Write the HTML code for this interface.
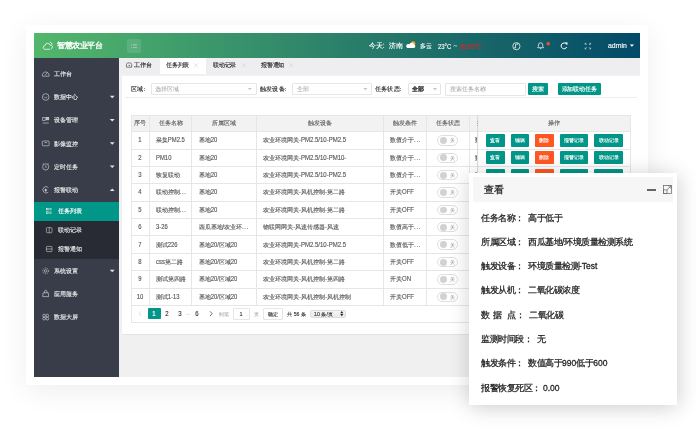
<!DOCTYPE html><html><head><meta charset="utf-8"><style>
*{margin:0;padding:0;box-sizing:border-box}
html,body{width:697px;height:429px;overflow:hidden;background:#fff;font-family:"Liberation Sans", sans-serif}
.a{position:absolute}
.t{position:absolute;white-space:nowrap}
svg{position:absolute;overflow:visible}
</style></head><body><div style="position:absolute;left:0;top:0;width:697px;height:429px;will-change:transform"><div class="a" style="left:26.00px;top:25.00px;width:622.00px;height:360.00px;background:#fff;border-radius:3px;box-shadow:0 6px 28px rgba(0,0,0,0.07)"></div>
<div class="a" style="left:34.00px;top:33.00px;width:606.00px;height:25.00px;background:linear-gradient(90deg,#53b76c,#034a68)"></div>
<div class="a" style="left:119.00px;top:58.00px;width:521.00px;height:319.00px;background:#f0f0f0"></div>
<div class="a" style="left:119.00px;top:58.00px;width:521.00px;height:15.50px;background:#eeeef0"></div>
<div class="a" style="left:159.70px;top:58.00px;width:46.00px;height:15.50px;background:#fff"></div>
<div class="a" style="left:121.50px;top:76.30px;width:518.50px;height:257.70px;background:#fff;box-shadow:0 0.5px 1px rgba(0,0,0,0.05)"></div>
<div class="a" style="left:34.00px;top:58.00px;width:85.00px;height:319.00px;background:#393d49"></div>
<div class="a" style="left:34.00px;top:201.80px;width:85.00px;height:57.20px;background:#282b33"></div>
<div class="a" style="left:34.00px;top:201.80px;width:85.00px;height:19.20px;background:#009688"></div>
<svg style="left:0;top:0" width="697" height="429" viewBox="0 0 697 429"><g fill="none" stroke="#fff" stroke-width="0.75" stroke-linecap="round"><path d="M49.8 49.3 H44.6 A1.9 1.9 0 0 1 44.9 45.6 A2.75 2.75 0 0 1 50.3 45.5 A1.6 1.6 0 0 1 51.3 48.6"/><path d="M50.3 42.2 A2.4 2.4 0 0 1 52.1 44.5"/></g></svg>
<div class="t" style="left:57.00px;top:0;font-size:40px;line-height:40px;transform:translate(0,41.18px) scale(0.19000);transform-origin:0 0;color:#fff;font-weight:400;-webkit-text-stroke:1.68px #fff;">智慧农业平台</div>
<div class="a" style="left:127.10px;top:38.90px;width:13.90px;height:13.70px;background:rgba(255,255,255,0.12);border-radius:2px"></div>
<svg style="left:0;top:0" width="697" height="429" viewBox="0 0 697 429"><g fill="rgba(255,255,255,0.4)"><rect x="131.2" y="44.4" width="0.9" height="1.1"/><rect x="132.8" y="44.4" width="4.2" height="1.1"/><rect x="131.2" y="47.0" width="0.9" height="0.8"/><rect x="132.8" y="47.0" width="4.2" height="0.8"/></g></svg>
<div class="t" style="left:368.90px;top:0;font-size:40px;line-height:40px;transform:translate(0,42.07px) scale(0.16500);transform-origin:0 0;color:#fff;font-weight:400;-webkit-text-stroke:0.73px #fff;">今天</div>
<svg style="left:0;top:0" width="697" height="429" viewBox="0 0 697 429"><g fill="rgba(255,255,255,0.85)"><rect x="383.1" y="43.6" width="1" height="1"/><rect x="383.1" y="46.9" width="1" height="1"/></g></svg>
<div class="t" style="left:388.60px;top:0;font-size:40px;line-height:40px;transform:translate(0,42.07px) scale(0.16500);transform-origin:0 0;color:#fff;font-weight:400;-webkit-text-stroke:0.73px #fff;">济南</div>
<svg style="left:0;top:0" width="697" height="429" viewBox="0 0 697 429"><circle cx="413.1" cy="43.6" r="2.3" fill="#f5a623"/><path d="M407.2 47.9 H414.1 A1.7 1.7 0 0 0 414.0 44.6 A2.5 2.5 0 0 0 409.3 44.3 A1.8 1.8 0 0 0 407.2 47.9Z" fill="#fff"/></svg>
<div class="t" style="left:420.00px;top:0;font-size:40px;line-height:40px;transform:translate(0,42.21px) scale(0.15750);transform-origin:0 0;color:#fff;font-weight:400;-webkit-text-stroke:0.76px #fff;">多云</div>
<div class="t" style="left:438.30px;top:0;font-size:40px;line-height:40px;transform:translate(0,43.81px) scale(0.14750);transform-origin:0 0;color:#fff;font-weight:400;-webkit-text-stroke:0.81px #fff;"><span style="display:inline-block;transform:scaleY(1.08);transform-origin:0 85%">23°C</span></div>
<svg style="left:0;top:0" width="697" height="429" viewBox="0 0 697 429"><path d="M453.5 46.2 Q454.4 44.9 455.3 45.8 Q456.2 46.7 457.1 45.4" fill="none" stroke="rgba(255,255,255,0.9)" stroke-width="0.75"/></svg>
<div class="t" style="left:459.80px;top:0;font-size:40px;line-height:40px;transform:translate(0,43.81px) scale(0.14750);transform-origin:0 0;color:#ee1c24;font-weight:400;-webkit-text-stroke:1.08px #ee1c24;"><span style="display:inline-block;transform:scaleY(1.08);transform-origin:0 85%">30.67°C</span></div>
<svg style="left:0;top:0" width="697" height="429" viewBox="0 0 697 429"><g fill="none" stroke="#fff" stroke-width="0.75"><circle cx="516.4" cy="46.2" r="3.6"/><path d="M515.6 47.6 V44.3 L517.6 43.8 V44.8"/><circle cx="515.0" cy="47.7" r="0.7" fill="#fff" stroke="none"/></g></svg>
<svg style="left:0;top:0" width="697" height="429" viewBox="0 0 697 429"><g fill="none" stroke="#fff" stroke-width="0.7"><path d="M537.6 47.7 H543.6 L542.8 46.6 V45.0 A2.2 2.2 0 0 0 538.4 45.0 V46.6 Z"/><path d="M539.9 48.6 H541.3"/></g></svg>
<svg style="left:0;top:0" width="697" height="429" viewBox="0 0 697 429"><circle cx="548.2" cy="43.8" r="1.8" fill="#f5502a"/></svg>
<svg style="left:0;top:0" width="697" height="429" viewBox="0 0 697 429"><g fill="none" stroke="#fff" stroke-width="1.0"><path d="M566.4 44.2 A2.9 2.9 0 1 0 566.7 47.0"/></g><path d="M564.9 42.2 L567.6 42.5 L567.2 45.2 Z" fill="#fff"/></svg>
<svg style="left:0;top:0" width="697" height="429" viewBox="0 0 697 429"><g fill="none" stroke="rgba(255,255,255,0.75)" stroke-width="0.7"><path d="M585.3 43.7 L586.6 45.0 M590.4 43.7 L589.1 45.0 M585.3 48.6 L586.6 47.3 M590.4 48.6 L589.1 47.3"/><path d="M585.1 44.6 V43.3 H586.4 M589.3 43.3 H590.6 V44.6 M590.6 47.7 V49.0 H589.3 M586.4 49.0 H585.1 V47.7"/></g></svg>
<div class="t" style="left:608.00px;top:0;font-size:40px;line-height:40px;transform:translate(0,42.12px) scale(0.17250);transform-origin:0 0;color:#fff;font-weight:400;-webkit-text-stroke:0.70px #fff;"><span style="display:inline-block;transform:scaleY(1.08);transform-origin:0 85%">admin</span></div>
<svg style="left:0;top:0" width="697" height="429" viewBox="0 0 697 429"><path d="M629.8 44.4 H634.0 L631.9 46.8Z" fill="#fff"/></svg>
<div class="t" style="left:53.60px;top:0;font-size:40px;line-height:40px;transform:translate(0,71.03px) scale(0.14625);transform-origin:0 0;color:rgba(255,255,255,0.8);font-weight:400;-webkit-text-stroke:1.16px rgba(255,255,255,0.8);">工作台</div>
<svg style="left:0;top:0" width="697" height="429" viewBox="0 0 697 429"><g fill="none" stroke="rgba(255,255,255,0.62)" stroke-width="0.8" transform="translate(45.70,73.90)"><path d="M-3.3 2.3 A3.4 3.4 0 1 1 3.3 2.3 Z"/><path d="M-0.6 1.3 L1.8 -1.4"/></g></svg>
<div class="t" style="left:53.60px;top:0;font-size:40px;line-height:40px;transform:translate(0,94.13px) scale(0.14625);transform-origin:0 0;color:rgba(255,255,255,0.8);font-weight:400;-webkit-text-stroke:1.16px rgba(255,255,255,0.8);">数据中心</div>
<svg style="left:0;top:0" width="697" height="429" viewBox="0 0 697 429"><g fill="none" stroke="rgba(255,255,255,0.62)" stroke-width="0.8" transform="translate(45.70,97.00)"><circle r="3.3"/><path d="M-1.5 -0.3 L0 1.2 L1.5 -0.3"/></g></svg>
<svg style="left:0;top:0" width="697" height="429" viewBox="0 0 697 429"><path d="M109.8 95.80 H114.7 L112.25 98.30Z" fill="rgba(255,255,255,0.85)"/></svg>
<div class="t" style="left:53.60px;top:0;font-size:40px;line-height:40px;transform:translate(0,117.33px) scale(0.14625);transform-origin:0 0;color:rgba(255,255,255,0.8);font-weight:400;-webkit-text-stroke:1.16px rgba(255,255,255,0.8);">设备管理</div>
<svg style="left:0;top:0" width="697" height="429" viewBox="0 0 697 429"><g fill="none" stroke="rgba(255,255,255,0.62)" stroke-width="0.8" transform="translate(45.70,120.20)"><rect x="-3" y="-2.8" width="2.5" height="3" /><rect x="0.6" y="-2.8" width="2.4" height="2.4" fill="rgba(255,255,255,0.62)"/><path d="M-3 2.8 H3"/></g></svg>
<svg style="left:0;top:0" width="697" height="429" viewBox="0 0 697 429"><path d="M109.8 119.00 H114.7 L112.25 121.50Z" fill="rgba(255,255,255,0.85)"/></svg>
<div class="t" style="left:53.60px;top:0;font-size:40px;line-height:40px;transform:translate(0,140.53px) scale(0.14625);transform-origin:0 0;color:rgba(255,255,255,0.8);font-weight:400;-webkit-text-stroke:1.16px rgba(255,255,255,0.8);">影像监控</div>
<svg style="left:0;top:0" width="697" height="429" viewBox="0 0 697 429"><g fill="none" stroke="rgba(255,255,255,0.62)" stroke-width="0.8" transform="translate(45.70,143.40)"><rect x="-3.4" y="-2.4" width="6.8" height="4.8" rx="0.9"/><path d="M-1.2 -0.5 L0.3 -1.2 L1.5 -0.3"/></g></svg>
<svg style="left:0;top:0" width="697" height="429" viewBox="0 0 697 429"><path d="M109.8 142.20 H114.7 L112.25 144.70Z" fill="rgba(255,255,255,0.85)"/></svg>
<div class="t" style="left:53.60px;top:0;font-size:40px;line-height:40px;transform:translate(0,163.73px) scale(0.14625);transform-origin:0 0;color:rgba(255,255,255,0.8);font-weight:400;-webkit-text-stroke:1.16px rgba(255,255,255,0.8);">定时任务</div>
<svg style="left:0;top:0" width="697" height="429" viewBox="0 0 697 429"><g fill="none" stroke="rgba(255,255,255,0.62)" stroke-width="0.8" transform="translate(45.70,166.60)"><circle cy="0.3" r="3.1"/><path d="M0 -1.2 V0.6 H1.2 M-3 -2.6 L-2 -3.4 M3 -2.6 L2 -3.4"/></g></svg>
<svg style="left:0;top:0" width="697" height="429" viewBox="0 0 697 429"><path d="M109.8 165.40 H114.7 L112.25 167.90Z" fill="rgba(255,255,255,0.85)"/></svg>
<div class="t" style="left:53.60px;top:0;font-size:40px;line-height:40px;transform:translate(0,186.93px) scale(0.14625);transform-origin:0 0;color:rgba(255,255,255,0.8);font-weight:400;-webkit-text-stroke:1.16px rgba(255,255,255,0.8);">报警联动</div>
<svg style="left:0;top:0" width="697" height="429" viewBox="0 0 697 429"><g fill="none" stroke="rgba(255,255,255,0.62)" stroke-width="0.8" transform="translate(45.70,189.80)"><path d="M2.6 -2.3 A3.2 3.2 0 1 0 2.6 2.3"/><path d="M-0.6 1.3 V-0.2 A0.6 0.6 0 0 1 0.6 -0.2 V1.3 Z" fill="rgba(255,255,255,0.62)"/></g></svg>
<svg style="left:0;top:0" width="697" height="429" viewBox="0 0 697 429"><path d="M109.8 191.00 H114.7 L112.25 188.50Z" fill="rgba(255,255,255,0.85)"/></svg>
<div class="t" style="left:53.60px;top:0;font-size:40px;line-height:40px;transform:translate(0,268.03px) scale(0.14625);transform-origin:0 0;color:rgba(255,255,255,0.8);font-weight:400;-webkit-text-stroke:1.16px rgba(255,255,255,0.8);">系统设置</div>
<svg style="left:0;top:0" width="697" height="429" viewBox="0 0 697 429"><g fill="none" stroke="rgba(255,255,255,0.62)" stroke-width="0.8" transform="translate(45.70,270.90)"><circle r="1.3"/><circle r="2.9" stroke-dasharray="1.2 0.9"/></g></svg>
<svg style="left:0;top:0" width="697" height="429" viewBox="0 0 697 429"><path d="M109.8 269.70 H114.7 L112.25 272.20Z" fill="rgba(255,255,255,0.85)"/></svg>
<div class="t" style="left:53.60px;top:0;font-size:40px;line-height:40px;transform:translate(0,290.93px) scale(0.14625);transform-origin:0 0;color:rgba(255,255,255,0.8);font-weight:400;-webkit-text-stroke:1.16px rgba(255,255,255,0.8);">应用服务</div>
<svg style="left:0;top:0" width="697" height="429" viewBox="0 0 697 429"><g fill="none" stroke="rgba(255,255,255,0.62)" stroke-width="0.8" transform="translate(45.70,293.80)"><path d="M-3 2.8 H3 L2.6 -1 H-2.6 Z"/><path d="M-1.2 -1 V-2.2 A1.2 1.2 0 0 1 1.2 -2.2 V-1"/></g></svg>
<div class="t" style="left:53.60px;top:0;font-size:40px;line-height:40px;transform:translate(0,314.23px) scale(0.14625);transform-origin:0 0;color:rgba(255,255,255,0.8);font-weight:400;-webkit-text-stroke:1.16px rgba(255,255,255,0.8);">数据大屏</div>
<svg style="left:0;top:0" width="697" height="429" viewBox="0 0 697 429"><g fill="none" stroke="rgba(255,255,255,0.62)" stroke-width="0.8" transform="translate(45.70,317.10)"><circle cx="-1.6" cy="-1.5" r="1.4"/><circle cx="1.6" cy="-1.5" r="1.4"/><circle cx="-1.6" cy="1.5" r="1.4"/><circle cx="1.6" cy="1.5" r="1.4"/></g></svg>
<div class="t" style="left:57.60px;top:0;font-size:40px;line-height:40px;transform:translate(0,208.43px) scale(0.14625);transform-origin:0 0;color:#fff;font-weight:400;-webkit-text-stroke:1.16px #fff;">任务列表</div>
<div class="t" style="left:57.60px;top:0;font-size:40px;line-height:40px;transform:translate(0,227.33px) scale(0.14625);transform-origin:0 0;color:rgba(255,255,255,0.8);font-weight:400;-webkit-text-stroke:1.16px rgba(255,255,255,0.8);">联动记录</div>
<div class="t" style="left:57.60px;top:0;font-size:40px;line-height:40px;transform:translate(0,246.23px) scale(0.14625);transform-origin:0 0;color:rgba(255,255,255,0.8);font-weight:400;-webkit-text-stroke:1.16px rgba(255,255,255,0.8);">报警通知</div>
<svg style="left:0;top:0" width="697" height="429" viewBox="0 0 697 429"><g fill="none" stroke="rgba(255,255,255,0.85)" stroke-width="0.7"><rect x="46.6" y="208.3" width="1.6" height="1.6"/><rect x="46.6" y="211.8" width="1.6" height="1.6"/><path d="M49.3 208.6 H51.6 M49.3 209.8 H51.6 M49.3 212.1 H51.6 M49.3 213.3 H51.6"/></g></svg>
<svg style="left:0;top:0" width="697" height="429" viewBox="0 0 697 429"><g fill="none" stroke="rgba(255,255,255,0.62)" stroke-width="0.75"><rect x="46.4" y="227.6" width="5.6" height="5.2" rx="1"/><path d="M49.2 227.6 V232.8"/></g></svg>
<svg style="left:0;top:0" width="697" height="429" viewBox="0 0 697 429"><g fill="none" stroke="rgba(255,255,255,0.62)" stroke-width="0.75"><rect x="46.4" y="246.4" width="5.6" height="5.2" rx="0.8"/><path d="M46.4 249 H52"/></g></svg>
<svg style="left:0;top:0" width="697" height="429" viewBox="0 0 697 429"><g fill="none" stroke="#555" stroke-width="0.75"><path d="M126.5 67.2 V64.4 Q126.5 63.5 127.4 63.2 L129.1 62.8 L130.8 63.2 Q131.7 63.5 131.7 64.4 V67.2 Z"/></g><circle cx="129.3" cy="65.4" r="0.65" fill="#555"/></svg>
<div class="t" style="left:134.20px;top:0;font-size:40px;line-height:40px;transform:translate(0,62.38px) scale(0.14375);transform-origin:0 0;color:#333;font-weight:400;-webkit-text-stroke:1.11px #333;">工作台</div>
<div class="t" style="left:165.70px;top:0;font-size:40px;line-height:40px;transform:translate(0,62.38px) scale(0.14375);transform-origin:0 0;color:#333;font-weight:400;-webkit-text-stroke:1.11px #333;">任务列表</div>
<div class="t" style="left:213.00px;top:0;font-size:40px;line-height:40px;transform:translate(0,62.38px) scale(0.14375);transform-origin:0 0;color:#333;font-weight:400;-webkit-text-stroke:1.11px #333;">联动记录</div>
<div class="t" style="left:260.70px;top:0;font-size:40px;line-height:40px;transform:translate(0,62.38px) scale(0.14375);transform-origin:0 0;color:#333;font-weight:400;-webkit-text-stroke:1.11px #333;">报警通知</div>
<svg style="left:0;top:0" width="697" height="429" viewBox="0 0 697 429"><path d="M194.20 63.2 L198.20 67.4 M198.20 63.2 L194.20 67.4" stroke="#c8c8c8" stroke-width="0.45" fill="none"/></svg>
<svg style="left:0;top:0" width="697" height="429" viewBox="0 0 697 429"><path d="M241.80 63.2 L245.80 67.4 M245.80 63.2 L241.80 67.4" stroke="#c8c8c8" stroke-width="0.45" fill="none"/></svg>
<svg style="left:0;top:0" width="697" height="429" viewBox="0 0 697 429"><path d="M289.10 63.2 L293.10 67.4 M293.10 63.2 L289.10 67.4" stroke="#c8c8c8" stroke-width="0.45" fill="none"/></svg>
<div class="t" style="left:130.70px;top:0;font-size:40px;line-height:40px;transform:translate(0,85.76px) scale(0.15500);transform-origin:0 0;color:#333;font-weight:400;-webkit-text-stroke:0.97px #333;">区域:</div>
<div class="a" style="left:151.00px;top:82.80px;width:105.70px;height:12.60px;border:0.6px solid #e6e6e6;border-radius:1px"></div>
<div class="t" style="left:155.10px;top:0;font-size:40px;line-height:40px;transform:translate(0,86.16px) scale(0.15000);transform-origin:0 0;color:#aaa;font-weight:400;-webkit-text-stroke:0.33px #aaa;">选择区域</div>
<svg style="left:0;top:0" width="697" height="429" viewBox="0 0 697 429"><path d="M247.90 87.90 H251.90 L249.90 90.10Z" fill="#c2c2c2"/></svg>
<div class="t" style="left:259.80px;top:0;font-size:40px;line-height:40px;transform:translate(0,85.76px) scale(0.15500);transform-origin:0 0;color:#333;font-weight:400;-webkit-text-stroke:0.97px #333;">触发设备:</div>
<div class="a" style="left:291.50px;top:82.80px;width:80.50px;height:12.60px;border:0.6px solid #e6e6e6;border-radius:1px"></div>
<div class="t" style="left:296.50px;top:0;font-size:40px;line-height:40px;transform:translate(0,86.16px) scale(0.15000);transform-origin:0 0;color:#aaa;font-weight:400;-webkit-text-stroke:0.33px #aaa;">全部</div>
<svg style="left:0;top:0" width="697" height="429" viewBox="0 0 697 429"><path d="M363.30 88.00 H367.30 L365.30 90.20Z" fill="#c2c2c2"/></svg>
<div class="t" style="left:375.30px;top:0;font-size:40px;line-height:40px;transform:translate(0,85.76px) scale(0.15500);transform-origin:0 0;color:#333;font-weight:400;-webkit-text-stroke:0.97px #333;">任务状态:</div>
<div class="a" style="left:407.50px;top:82.80px;width:33.50px;height:12.60px;border:0.6px solid #e6e6e6;border-radius:1px"></div>
<div class="t" style="left:411.80px;top:0;font-size:40px;line-height:40px;transform:translate(0,86.16px) scale(0.15000);transform-origin:0 0;color:#333;font-weight:400;-webkit-text-stroke:2.33px #333;">全部</div>
<svg style="left:0;top:0" width="697" height="429" viewBox="0 0 697 429"><path d="M433.00 88.00 H437.00 L435.00 90.20Z" fill="#c2c2c2"/></svg>
<div class="a" style="left:445.20px;top:82.70px;width:80.50px;height:13.00px;border:0.6px solid #e6e6e6;border-radius:1px"></div>
<div class="t" style="left:449.50px;top:0;font-size:40px;line-height:40px;transform:translate(0,86.16px) scale(0.15000);transform-origin:0 0;color:#aaa;font-weight:400;-webkit-text-stroke:0.33px #aaa;">搜索任务名称</div>
<div class="a" style="left:528.30px;top:82.70px;width:20.20px;height:12.40px;background:#009688;border-radius:1px"></div>
<div class="t" style="left:338.40px;width:2758.62px;text-align:center;top:0;font-size:40px;line-height:40px;transform:translate(0,86.16px) scale(0.14500);transform-origin:0 0;color:#fff;font-weight:400;-webkit-text-stroke:1.03px #fff;">搜索</div>
<div class="a" style="left:557.50px;top:82.70px;width:43.90px;height:12.40px;background:#009688;border-radius:1px"></div>
<div class="t" style="left:379.45px;width:2758.62px;text-align:center;top:0;font-size:40px;line-height:40px;transform:translate(0,86.16px) scale(0.14500);transform-origin:0 0;color:#fff;font-weight:400;-webkit-text-stroke:1.03px #fff;">添加联动任务</div>
<div class="a" style="left:124.80px;top:97.10px;width:512.70px;height:0.60px;background:#eee"></div>
<div class="a" style="left:131.30px;top:115.00px;width:499.50px;height:16.50px;background:#f2f2f2"></div>
<div class="a" style="left:131.30px;top:115.00px;width:499.50px;height:207.60px;border:0.6px solid #e6e6e6"></div>
<div class="a" style="left:149.20px;top:115.00px;width:0.60px;height:190.20px;background:#e6e6e6"></div>
<div class="a" style="left:191.20px;top:115.00px;width:0.60px;height:190.20px;background:#e6e6e6"></div>
<div class="a" style="left:255.50px;top:115.00px;width:0.60px;height:190.20px;background:#e6e6e6"></div>
<div class="a" style="left:383.30px;top:115.00px;width:0.60px;height:190.20px;background:#e6e6e6"></div>
<div class="a" style="left:426.00px;top:115.00px;width:0.60px;height:190.20px;background:#e6e6e6"></div>
<div class="a" style="left:468.60px;top:115.00px;width:0.60px;height:190.20px;background:#e6e6e6"></div>
<div class="a" style="left:131.30px;top:131.20px;width:499.50px;height:0.60px;background:#e6e6e6"></div>
<div class="a" style="left:131.30px;top:148.57px;width:499.50px;height:0.60px;background:#e6e6e6"></div>
<div class="a" style="left:131.30px;top:165.94px;width:499.50px;height:0.60px;background:#e6e6e6"></div>
<div class="a" style="left:131.30px;top:183.31px;width:499.50px;height:0.60px;background:#e6e6e6"></div>
<div class="a" style="left:131.30px;top:200.68px;width:499.50px;height:0.60px;background:#e6e6e6"></div>
<div class="a" style="left:131.30px;top:218.05px;width:499.50px;height:0.60px;background:#e6e6e6"></div>
<div class="a" style="left:131.30px;top:235.42px;width:499.50px;height:0.60px;background:#e6e6e6"></div>
<div class="a" style="left:131.30px;top:252.79px;width:499.50px;height:0.60px;background:#e6e6e6"></div>
<div class="a" style="left:131.30px;top:270.16px;width:499.50px;height:0.60px;background:#e6e6e6"></div>
<div class="a" style="left:131.30px;top:287.53px;width:499.50px;height:0.60px;background:#e6e6e6"></div>
<div class="a" style="left:131.30px;top:304.90px;width:499.50px;height:0.60px;background:#e6e6e6"></div>
<div class="t" style="left:-59.60px;width:2711.86px;text-align:center;top:0;font-size:40px;line-height:40px;transform:translate(0,120.01px) scale(0.14750);transform-origin:0 0;color:#666;font-weight:400;-webkit-text-stroke:1.02px #666;">序号</div>
<div class="t" style="left:-29.50px;width:2711.86px;text-align:center;top:0;font-size:40px;line-height:40px;transform:translate(0,120.01px) scale(0.14750);transform-origin:0 0;color:#666;font-weight:400;-webkit-text-stroke:1.02px #666;">任务名称</div>
<div class="t" style="left:23.65px;width:2711.86px;text-align:center;top:0;font-size:40px;line-height:40px;transform:translate(0,120.01px) scale(0.14750);transform-origin:0 0;color:#666;font-weight:400;-webkit-text-stroke:1.02px #666;">所属区域</div>
<div class="t" style="left:119.70px;width:2711.86px;text-align:center;top:0;font-size:40px;line-height:40px;transform:translate(0,120.01px) scale(0.14750);transform-origin:0 0;color:#666;font-weight:400;-webkit-text-stroke:1.02px #666;">触发设备</div>
<div class="t" style="left:204.95px;width:2711.86px;text-align:center;top:0;font-size:40px;line-height:40px;transform:translate(0,120.01px) scale(0.14750);transform-origin:0 0;color:#666;font-weight:400;-webkit-text-stroke:1.02px #666;">触发条件</div>
<div class="t" style="left:247.60px;width:2711.86px;text-align:center;top:0;font-size:40px;line-height:40px;transform:translate(0,120.01px) scale(0.14750);transform-origin:0 0;color:#666;font-weight:400;-webkit-text-stroke:1.02px #666;">任务状态</div>
<div class="t" style="left:-59.60px;width:2711.86px;text-align:center;top:0;font-size:40px;line-height:40px;transform:translate(0,137.29px) scale(0.14750);transform-origin:0 0;color:#555;font-weight:400;-webkit-text-stroke:0.81px #555;"><span style="display:inline-block;transform:scaleY(1.08);transform-origin:0 85%">1</span></div>
<div class="t" style="left:155.50px;top:0;font-size:40px;line-height:40px;transform:translate(0,137.29px) scale(0.14750);transform-origin:0 0;color:#555;font-weight:400;-webkit-text-stroke:0.81px #555;">采集<span style="display:inline-block;transform:scaleY(1.08);transform-origin:0 85%">PM2.5</span></div>
<div class="t" style="left:199.00px;top:0;font-size:40px;line-height:40px;transform:translate(0,137.29px) scale(0.14750);transform-origin:0 0;color:#555;font-weight:400;-webkit-text-stroke:0.81px #555;">基地<span style="display:inline-block;transform:scaleY(1.08);transform-origin:0 85%">20</span></div>
<div class="t" style="left:262.60px;top:0;font-size:40px;line-height:40px;transform:translate(0,137.25px) scale(0.15000);transform-origin:0 0;color:#555;font-weight:400;-webkit-text-stroke:0.80px #555;">农业环境网关<span style="display:inline-block;transform:scaleY(1.08);transform-origin:0 85%">-PM2.5/10-PM2.5</span></div>
<div class="t" style="left:390.00px;top:0;font-size:40px;line-height:40px;transform:translate(0,137.25px) scale(0.15000);transform-origin:0 0;color:#555;font-weight:400;-webkit-text-stroke:0.80px #555;">数值介于<span style="display:inline-block;letter-spacing:5px;transform:scaleY(1.08);transform-origin:0 85%">...</span></div>
<div class="a" style="left:437.20px;top:135.19px;width:20.70px;height:10.40px;border:0.6px solid #dedede;border-radius:5.2px;background:#fff"></div>
<div class="a" style="left:440.00px;top:137.09px;width:6.90px;height:6.90px;background:#d2d2d2;border-radius:50%"></div>
<div class="t" style="left:251.90px;width:3333.33px;text-align:center;top:0;font-size:40px;line-height:40px;transform:translate(0,138.23px) scale(0.12000);transform-origin:0 0;color:#999;font-weight:400;-webkit-text-stroke:0.67px #999;">关</div>
<div class="t" style="left:474.60px;top:0;font-size:40px;line-height:40px;transform:translate(0,137.25px) scale(0.15000);transform-origin:0 0;color:#555;font-weight:400;-webkit-text-stroke:0.80px #555;">数</div>
<div class="t" style="left:-59.60px;width:2711.86px;text-align:center;top:0;font-size:40px;line-height:40px;transform:translate(0,154.66px) scale(0.14750);transform-origin:0 0;color:#555;font-weight:400;-webkit-text-stroke:0.81px #555;"><span style="display:inline-block;transform:scaleY(1.08);transform-origin:0 85%">2</span></div>
<div class="t" style="left:155.50px;top:0;font-size:40px;line-height:40px;transform:translate(0,154.66px) scale(0.14750);transform-origin:0 0;color:#555;font-weight:400;-webkit-text-stroke:0.81px #555;"><span style="display:inline-block;transform:scaleY(1.08);transform-origin:0 85%">PM10</span></div>
<div class="t" style="left:199.00px;top:0;font-size:40px;line-height:40px;transform:translate(0,154.66px) scale(0.14750);transform-origin:0 0;color:#555;font-weight:400;-webkit-text-stroke:0.81px #555;">基地<span style="display:inline-block;transform:scaleY(1.08);transform-origin:0 85%">20</span></div>
<div class="t" style="left:262.60px;top:0;font-size:40px;line-height:40px;transform:translate(0,154.62px) scale(0.15000);transform-origin:0 0;color:#555;font-weight:400;-webkit-text-stroke:0.80px #555;">农业环境网关<span style="display:inline-block;transform:scaleY(1.08);transform-origin:0 85%">-PM2.5/10-PM10-</span></div>
<div class="t" style="left:390.00px;top:0;font-size:40px;line-height:40px;transform:translate(0,154.62px) scale(0.15000);transform-origin:0 0;color:#555;font-weight:400;-webkit-text-stroke:0.80px #555;">数值介于<span style="display:inline-block;letter-spacing:5px;transform:scaleY(1.08);transform-origin:0 85%">...</span></div>
<div class="a" style="left:437.20px;top:152.56px;width:20.70px;height:10.40px;border:0.6px solid #dedede;border-radius:5.2px;background:#fff"></div>
<div class="a" style="left:440.00px;top:154.46px;width:6.90px;height:6.90px;background:#d2d2d2;border-radius:50%"></div>
<div class="t" style="left:251.90px;width:3333.33px;text-align:center;top:0;font-size:40px;line-height:40px;transform:translate(0,155.60px) scale(0.12000);transform-origin:0 0;color:#999;font-weight:400;-webkit-text-stroke:0.67px #999;">关</div>
<div class="t" style="left:474.60px;top:0;font-size:40px;line-height:40px;transform:translate(0,154.62px) scale(0.15000);transform-origin:0 0;color:#555;font-weight:400;-webkit-text-stroke:0.80px #555;">数</div>
<div class="t" style="left:-59.60px;width:2711.86px;text-align:center;top:0;font-size:40px;line-height:40px;transform:translate(0,172.03px) scale(0.14750);transform-origin:0 0;color:#555;font-weight:400;-webkit-text-stroke:0.81px #555;"><span style="display:inline-block;transform:scaleY(1.08);transform-origin:0 85%">3</span></div>
<div class="t" style="left:155.50px;top:0;font-size:40px;line-height:40px;transform:translate(0,172.03px) scale(0.14750);transform-origin:0 0;color:#555;font-weight:400;-webkit-text-stroke:0.81px #555;">恢复联动</div>
<div class="t" style="left:199.00px;top:0;font-size:40px;line-height:40px;transform:translate(0,172.03px) scale(0.14750);transform-origin:0 0;color:#555;font-weight:400;-webkit-text-stroke:0.81px #555;">基地<span style="display:inline-block;transform:scaleY(1.08);transform-origin:0 85%">20</span></div>
<div class="t" style="left:262.60px;top:0;font-size:40px;line-height:40px;transform:translate(0,171.99px) scale(0.15000);transform-origin:0 0;color:#555;font-weight:400;-webkit-text-stroke:0.80px #555;">农业环境网关<span style="display:inline-block;transform:scaleY(1.08);transform-origin:0 85%">-PM2.5/10-PM2.5</span></div>
<div class="t" style="left:390.00px;top:0;font-size:40px;line-height:40px;transform:translate(0,171.99px) scale(0.15000);transform-origin:0 0;color:#555;font-weight:400;-webkit-text-stroke:0.80px #555;">数值介于<span style="display:inline-block;letter-spacing:5px;transform:scaleY(1.08);transform-origin:0 85%">...</span></div>
<div class="a" style="left:437.20px;top:169.93px;width:20.70px;height:10.40px;border:0.6px solid #dedede;border-radius:5.2px;background:#fff"></div>
<div class="a" style="left:440.00px;top:171.83px;width:6.90px;height:6.90px;background:#d2d2d2;border-radius:50%"></div>
<div class="t" style="left:251.90px;width:3333.33px;text-align:center;top:0;font-size:40px;line-height:40px;transform:translate(0,172.97px) scale(0.12000);transform-origin:0 0;color:#999;font-weight:400;-webkit-text-stroke:0.67px #999;">关</div>
<div class="t" style="left:474.60px;top:0;font-size:40px;line-height:40px;transform:translate(0,171.99px) scale(0.15000);transform-origin:0 0;color:#555;font-weight:400;-webkit-text-stroke:0.80px #555;">数</div>
<div class="t" style="left:-59.60px;width:2711.86px;text-align:center;top:0;font-size:40px;line-height:40px;transform:translate(0,189.40px) scale(0.14750);transform-origin:0 0;color:#555;font-weight:400;-webkit-text-stroke:0.81px #555;"><span style="display:inline-block;transform:scaleY(1.08);transform-origin:0 85%">4</span></div>
<div class="t" style="left:155.50px;top:0;font-size:40px;line-height:40px;transform:translate(0,189.40px) scale(0.14750);transform-origin:0 0;color:#555;font-weight:400;-webkit-text-stroke:0.81px #555;">联动控制<span style="display:inline-block;letter-spacing:5px;transform:scaleY(1.08);transform-origin:0 85%">...</span></div>
<div class="t" style="left:199.00px;top:0;font-size:40px;line-height:40px;transform:translate(0,189.40px) scale(0.14750);transform-origin:0 0;color:#555;font-weight:400;-webkit-text-stroke:0.81px #555;">基地<span style="display:inline-block;transform:scaleY(1.08);transform-origin:0 85%">20</span></div>
<div class="t" style="left:262.60px;top:0;font-size:40px;line-height:40px;transform:translate(0,189.36px) scale(0.15000);transform-origin:0 0;color:#555;font-weight:400;-webkit-text-stroke:0.80px #555;">农业环境网关<span style="display:inline-block;transform:scaleY(1.08);transform-origin:0 85%">-</span>风机控制<span style="display:inline-block;transform:scaleY(1.08);transform-origin:0 85%">-</span>第二路</div>
<div class="t" style="left:390.00px;top:0;font-size:40px;line-height:40px;transform:translate(0,189.36px) scale(0.15000);transform-origin:0 0;color:#555;font-weight:400;-webkit-text-stroke:0.80px #555;">开关<span style="display:inline-block;transform:scaleY(1.08);transform-origin:0 85%">OFF</span></div>
<div class="a" style="left:437.20px;top:187.30px;width:20.70px;height:10.40px;border:0.6px solid #dedede;border-radius:5.2px;background:#fff"></div>
<div class="a" style="left:440.00px;top:189.20px;width:6.90px;height:6.90px;background:#d2d2d2;border-radius:50%"></div>
<div class="t" style="left:251.90px;width:3333.33px;text-align:center;top:0;font-size:40px;line-height:40px;transform:translate(0,190.34px) scale(0.12000);transform-origin:0 0;color:#999;font-weight:400;-webkit-text-stroke:0.67px #999;">关</div>
<div class="t" style="left:474.60px;top:0;font-size:40px;line-height:40px;transform:translate(0,189.36px) scale(0.15000);transform-origin:0 0;color:#555;font-weight:400;-webkit-text-stroke:0.80px #555;">开</div>
<div class="t" style="left:-59.60px;width:2711.86px;text-align:center;top:0;font-size:40px;line-height:40px;transform:translate(0,206.77px) scale(0.14750);transform-origin:0 0;color:#555;font-weight:400;-webkit-text-stroke:0.81px #555;"><span style="display:inline-block;transform:scaleY(1.08);transform-origin:0 85%">5</span></div>
<div class="t" style="left:155.50px;top:0;font-size:40px;line-height:40px;transform:translate(0,206.77px) scale(0.14750);transform-origin:0 0;color:#555;font-weight:400;-webkit-text-stroke:0.81px #555;">联动控制<span style="display:inline-block;letter-spacing:5px;transform:scaleY(1.08);transform-origin:0 85%">...</span></div>
<div class="t" style="left:199.00px;top:0;font-size:40px;line-height:40px;transform:translate(0,206.77px) scale(0.14750);transform-origin:0 0;color:#555;font-weight:400;-webkit-text-stroke:0.81px #555;">基地<span style="display:inline-block;transform:scaleY(1.08);transform-origin:0 85%">20</span></div>
<div class="t" style="left:262.60px;top:0;font-size:40px;line-height:40px;transform:translate(0,206.73px) scale(0.15000);transform-origin:0 0;color:#555;font-weight:400;-webkit-text-stroke:0.80px #555;">农业环境网关<span style="display:inline-block;transform:scaleY(1.08);transform-origin:0 85%">-</span>风机控制<span style="display:inline-block;transform:scaleY(1.08);transform-origin:0 85%">-</span>第二路</div>
<div class="t" style="left:390.00px;top:0;font-size:40px;line-height:40px;transform:translate(0,206.73px) scale(0.15000);transform-origin:0 0;color:#555;font-weight:400;-webkit-text-stroke:0.80px #555;">开关<span style="display:inline-block;transform:scaleY(1.08);transform-origin:0 85%">OFF</span></div>
<div class="a" style="left:437.20px;top:204.67px;width:20.70px;height:10.40px;border:0.6px solid #dedede;border-radius:5.2px;background:#fff"></div>
<div class="a" style="left:440.00px;top:206.57px;width:6.90px;height:6.90px;background:#d2d2d2;border-radius:50%"></div>
<div class="t" style="left:251.90px;width:3333.33px;text-align:center;top:0;font-size:40px;line-height:40px;transform:translate(0,207.71px) scale(0.12000);transform-origin:0 0;color:#999;font-weight:400;-webkit-text-stroke:0.67px #999;">关</div>
<div class="t" style="left:474.60px;top:0;font-size:40px;line-height:40px;transform:translate(0,206.73px) scale(0.15000);transform-origin:0 0;color:#555;font-weight:400;-webkit-text-stroke:0.80px #555;">开</div>
<div class="t" style="left:-59.60px;width:2711.86px;text-align:center;top:0;font-size:40px;line-height:40px;transform:translate(0,224.14px) scale(0.14750);transform-origin:0 0;color:#555;font-weight:400;-webkit-text-stroke:0.81px #555;"><span style="display:inline-block;transform:scaleY(1.08);transform-origin:0 85%">6</span></div>
<div class="t" style="left:155.50px;top:0;font-size:40px;line-height:40px;transform:translate(0,224.14px) scale(0.14750);transform-origin:0 0;color:#555;font-weight:400;-webkit-text-stroke:0.81px #555;"><span style="display:inline-block;transform:scaleY(1.08);transform-origin:0 85%">3-26</span></div>
<div class="t" style="left:199.00px;top:0;font-size:40px;line-height:40px;transform:translate(0,224.14px) scale(0.14750);transform-origin:0 0;color:#555;font-weight:400;-webkit-text-stroke:0.81px #555;">西瓜基地<span style="display:inline-block;transform:scaleY(1.08);transform-origin:0 85%">/</span>农业环<span style="display:inline-block;letter-spacing:5px;transform:scaleY(1.08);transform-origin:0 85%">...</span></div>
<div class="t" style="left:262.60px;top:0;font-size:40px;line-height:40px;transform:translate(0,224.10px) scale(0.15000);transform-origin:0 0;color:#555;font-weight:400;-webkit-text-stroke:0.80px #555;">物联网网关<span style="display:inline-block;transform:scaleY(1.08);transform-origin:0 85%">-</span>风速传感器<span style="display:inline-block;transform:scaleY(1.08);transform-origin:0 85%">-</span>风速</div>
<div class="t" style="left:390.00px;top:0;font-size:40px;line-height:40px;transform:translate(0,224.10px) scale(0.15000);transform-origin:0 0;color:#555;font-weight:400;-webkit-text-stroke:0.80px #555;">数值高于<span style="display:inline-block;letter-spacing:5px;transform:scaleY(1.08);transform-origin:0 85%">...</span></div>
<div class="a" style="left:437.20px;top:222.04px;width:20.70px;height:10.40px;border:0.6px solid #dedede;border-radius:5.2px;background:#fff"></div>
<div class="a" style="left:440.00px;top:223.94px;width:6.90px;height:6.90px;background:#d2d2d2;border-radius:50%"></div>
<div class="t" style="left:251.90px;width:3333.33px;text-align:center;top:0;font-size:40px;line-height:40px;transform:translate(0,225.08px) scale(0.12000);transform-origin:0 0;color:#999;font-weight:400;-webkit-text-stroke:0.67px #999;">关</div>
<div class="t" style="left:474.60px;top:0;font-size:40px;line-height:40px;transform:translate(0,224.10px) scale(0.15000);transform-origin:0 0;color:#555;font-weight:400;-webkit-text-stroke:0.80px #555;">数</div>
<div class="t" style="left:-59.60px;width:2711.86px;text-align:center;top:0;font-size:40px;line-height:40px;transform:translate(0,241.51px) scale(0.14750);transform-origin:0 0;color:#555;font-weight:400;-webkit-text-stroke:0.81px #555;"><span style="display:inline-block;transform:scaleY(1.08);transform-origin:0 85%">7</span></div>
<div class="t" style="left:155.50px;top:0;font-size:40px;line-height:40px;transform:translate(0,241.51px) scale(0.14750);transform-origin:0 0;color:#555;font-weight:400;-webkit-text-stroke:0.81px #555;">测试<span style="display:inline-block;transform:scaleY(1.08);transform-origin:0 85%">226</span></div>
<div class="t" style="left:199.00px;top:0;font-size:40px;line-height:40px;transform:translate(0,241.51px) scale(0.14750);transform-origin:0 0;color:#555;font-weight:400;-webkit-text-stroke:0.81px #555;">基地<span style="display:inline-block;transform:scaleY(1.08);transform-origin:0 85%">20/</span>区域<span style="display:inline-block;transform:scaleY(1.08);transform-origin:0 85%">20</span></div>
<div class="t" style="left:262.60px;top:0;font-size:40px;line-height:40px;transform:translate(0,241.47px) scale(0.15000);transform-origin:0 0;color:#555;font-weight:400;-webkit-text-stroke:0.80px #555;">农业环境网关<span style="display:inline-block;transform:scaleY(1.08);transform-origin:0 85%">-PM2.5/10-PM2.5</span></div>
<div class="t" style="left:390.00px;top:0;font-size:40px;line-height:40px;transform:translate(0,241.47px) scale(0.15000);transform-origin:0 0;color:#555;font-weight:400;-webkit-text-stroke:0.80px #555;">数值低于<span style="display:inline-block;letter-spacing:5px;transform:scaleY(1.08);transform-origin:0 85%">...</span></div>
<div class="a" style="left:437.20px;top:239.41px;width:20.70px;height:10.40px;border:0.6px solid #dedede;border-radius:5.2px;background:#fff"></div>
<div class="a" style="left:440.00px;top:241.31px;width:6.90px;height:6.90px;background:#d2d2d2;border-radius:50%"></div>
<div class="t" style="left:251.90px;width:3333.33px;text-align:center;top:0;font-size:40px;line-height:40px;transform:translate(0,242.45px) scale(0.12000);transform-origin:0 0;color:#999;font-weight:400;-webkit-text-stroke:0.67px #999;">关</div>
<div class="t" style="left:474.60px;top:0;font-size:40px;line-height:40px;transform:translate(0,241.47px) scale(0.15000);transform-origin:0 0;color:#555;font-weight:400;-webkit-text-stroke:0.80px #555;">数</div>
<div class="t" style="left:-59.60px;width:2711.86px;text-align:center;top:0;font-size:40px;line-height:40px;transform:translate(0,258.88px) scale(0.14750);transform-origin:0 0;color:#555;font-weight:400;-webkit-text-stroke:0.81px #555;"><span style="display:inline-block;transform:scaleY(1.08);transform-origin:0 85%">8</span></div>
<div class="t" style="left:155.50px;top:0;font-size:40px;line-height:40px;transform:translate(0,258.88px) scale(0.14750);transform-origin:0 0;color:#555;font-weight:400;-webkit-text-stroke:0.81px #555;"><span style="display:inline-block;transform:scaleY(1.08);transform-origin:0 85%">css</span>第二路</div>
<div class="t" style="left:199.00px;top:0;font-size:40px;line-height:40px;transform:translate(0,258.88px) scale(0.14750);transform-origin:0 0;color:#555;font-weight:400;-webkit-text-stroke:0.81px #555;">基地<span style="display:inline-block;transform:scaleY(1.08);transform-origin:0 85%">20/</span>区域<span style="display:inline-block;transform:scaleY(1.08);transform-origin:0 85%">20</span></div>
<div class="t" style="left:262.60px;top:0;font-size:40px;line-height:40px;transform:translate(0,258.83px) scale(0.15000);transform-origin:0 0;color:#555;font-weight:400;-webkit-text-stroke:0.80px #555;">农业环境网关<span style="display:inline-block;transform:scaleY(1.08);transform-origin:0 85%">-</span>风机控制<span style="display:inline-block;transform:scaleY(1.08);transform-origin:0 85%">-</span>第二路</div>
<div class="t" style="left:390.00px;top:0;font-size:40px;line-height:40px;transform:translate(0,258.83px) scale(0.15000);transform-origin:0 0;color:#555;font-weight:400;-webkit-text-stroke:0.80px #555;">开关<span style="display:inline-block;transform:scaleY(1.08);transform-origin:0 85%">OFF</span></div>
<div class="a" style="left:437.20px;top:256.77px;width:20.70px;height:10.40px;border:0.6px solid #dedede;border-radius:5.2px;background:#fff"></div>
<div class="a" style="left:440.00px;top:258.67px;width:6.90px;height:6.90px;background:#d2d2d2;border-radius:50%"></div>
<div class="t" style="left:251.90px;width:3333.33px;text-align:center;top:0;font-size:40px;line-height:40px;transform:translate(0,259.82px) scale(0.12000);transform-origin:0 0;color:#999;font-weight:400;-webkit-text-stroke:0.67px #999;">关</div>
<div class="t" style="left:474.60px;top:0;font-size:40px;line-height:40px;transform:translate(0,258.83px) scale(0.15000);transform-origin:0 0;color:#555;font-weight:400;-webkit-text-stroke:0.80px #555;">开</div>
<div class="t" style="left:-59.60px;width:2711.86px;text-align:center;top:0;font-size:40px;line-height:40px;transform:translate(0,276.25px) scale(0.14750);transform-origin:0 0;color:#555;font-weight:400;-webkit-text-stroke:0.81px #555;"><span style="display:inline-block;transform:scaleY(1.08);transform-origin:0 85%">9</span></div>
<div class="t" style="left:155.50px;top:0;font-size:40px;line-height:40px;transform:translate(0,276.25px) scale(0.14750);transform-origin:0 0;color:#555;font-weight:400;-webkit-text-stroke:0.81px #555;">测试第四路</div>
<div class="t" style="left:199.00px;top:0;font-size:40px;line-height:40px;transform:translate(0,276.25px) scale(0.14750);transform-origin:0 0;color:#555;font-weight:400;-webkit-text-stroke:0.81px #555;">基地<span style="display:inline-block;transform:scaleY(1.08);transform-origin:0 85%">20/</span>区域<span style="display:inline-block;transform:scaleY(1.08);transform-origin:0 85%">20</span></div>
<div class="t" style="left:262.60px;top:0;font-size:40px;line-height:40px;transform:translate(0,276.21px) scale(0.15000);transform-origin:0 0;color:#555;font-weight:400;-webkit-text-stroke:0.80px #555;">农业环境网关<span style="display:inline-block;transform:scaleY(1.08);transform-origin:0 85%">-</span>风机控制<span style="display:inline-block;transform:scaleY(1.08);transform-origin:0 85%">-</span>第四路</div>
<div class="t" style="left:390.00px;top:0;font-size:40px;line-height:40px;transform:translate(0,276.21px) scale(0.15000);transform-origin:0 0;color:#555;font-weight:400;-webkit-text-stroke:0.80px #555;">开关<span style="display:inline-block;transform:scaleY(1.08);transform-origin:0 85%">ON</span></div>
<div class="a" style="left:437.20px;top:274.15px;width:20.70px;height:10.40px;border:0.6px solid #dedede;border-radius:5.2px;background:#fff"></div>
<div class="a" style="left:440.00px;top:276.05px;width:6.90px;height:6.90px;background:#d2d2d2;border-radius:50%"></div>
<div class="t" style="left:251.90px;width:3333.33px;text-align:center;top:0;font-size:40px;line-height:40px;transform:translate(0,277.19px) scale(0.12000);transform-origin:0 0;color:#999;font-weight:400;-webkit-text-stroke:0.67px #999;">关</div>
<div class="t" style="left:474.60px;top:0;font-size:40px;line-height:40px;transform:translate(0,276.21px) scale(0.15000);transform-origin:0 0;color:#555;font-weight:400;-webkit-text-stroke:0.80px #555;">开</div>
<div class="t" style="left:-59.60px;width:2711.86px;text-align:center;top:0;font-size:40px;line-height:40px;transform:translate(0,293.62px) scale(0.14750);transform-origin:0 0;color:#555;font-weight:400;-webkit-text-stroke:0.81px #555;"><span style="display:inline-block;transform:scaleY(1.08);transform-origin:0 85%">10</span></div>
<div class="t" style="left:155.50px;top:0;font-size:40px;line-height:40px;transform:translate(0,293.62px) scale(0.14750);transform-origin:0 0;color:#555;font-weight:400;-webkit-text-stroke:0.81px #555;">测试<span style="display:inline-block;transform:scaleY(1.08);transform-origin:0 85%">1-13</span></div>
<div class="t" style="left:199.00px;top:0;font-size:40px;line-height:40px;transform:translate(0,293.62px) scale(0.14750);transform-origin:0 0;color:#555;font-weight:400;-webkit-text-stroke:0.81px #555;">基地<span style="display:inline-block;transform:scaleY(1.08);transform-origin:0 85%">20/</span>区域<span style="display:inline-block;transform:scaleY(1.08);transform-origin:0 85%">20</span></div>
<div class="t" style="left:262.60px;top:0;font-size:40px;line-height:40px;transform:translate(0,293.58px) scale(0.15000);transform-origin:0 0;color:#555;font-weight:400;-webkit-text-stroke:0.80px #555;">农业环境网关<span style="display:inline-block;transform:scaleY(1.08);transform-origin:0 85%">-</span>风机控制<span style="display:inline-block;transform:scaleY(1.08);transform-origin:0 85%">-</span>风机控制</div>
<div class="t" style="left:390.00px;top:0;font-size:40px;line-height:40px;transform:translate(0,293.58px) scale(0.15000);transform-origin:0 0;color:#555;font-weight:400;-webkit-text-stroke:0.80px #555;">开关<span style="display:inline-block;transform:scaleY(1.08);transform-origin:0 85%">OFF</span></div>
<div class="a" style="left:437.20px;top:291.52px;width:20.70px;height:10.40px;border:0.6px solid #dedede;border-radius:5.2px;background:#fff"></div>
<div class="a" style="left:440.00px;top:293.42px;width:6.90px;height:6.90px;background:#d2d2d2;border-radius:50%"></div>
<div class="t" style="left:251.90px;width:3333.33px;text-align:center;top:0;font-size:40px;line-height:40px;transform:translate(0,294.56px) scale(0.12000);transform-origin:0 0;color:#999;font-weight:400;-webkit-text-stroke:0.67px #999;">关</div>
<div class="t" style="left:474.60px;top:0;font-size:40px;line-height:40px;transform:translate(0,293.58px) scale(0.15000);transform-origin:0 0;color:#555;font-weight:400;-webkit-text-stroke:0.80px #555;">开</div>
<div class="a" style="left:477.80px;top:115.60px;width:152.40px;height:15.45px;background:#f2f2f2"></div>
<div class="a" style="left:477.80px;top:131.95px;width:152.40px;height:16.47px;background:#fff"></div>
<div class="a" style="left:477.80px;top:149.32px;width:152.40px;height:16.47px;background:#fff"></div>
<div class="a" style="left:477.80px;top:166.69px;width:152.40px;height:16.47px;background:#fff"></div>
<div class="a" style="left:477.80px;top:184.06px;width:152.40px;height:16.47px;background:#fff"></div>
<div class="a" style="left:477.80px;top:201.43px;width:152.40px;height:16.47px;background:#fff"></div>
<div class="a" style="left:477.80px;top:218.80px;width:152.40px;height:16.47px;background:#fff"></div>
<div class="a" style="left:477.80px;top:236.17px;width:152.40px;height:16.47px;background:#fff"></div>
<div class="a" style="left:477.80px;top:253.54px;width:152.40px;height:16.47px;background:#fff"></div>
<div class="a" style="left:477.80px;top:270.91px;width:152.40px;height:16.47px;background:#fff"></div>
<div class="a" style="left:477.80px;top:288.28px;width:152.40px;height:16.47px;background:#fff"></div>
<div class="a" style="left:477.50px;top:131.20px;width:153.30px;height:0.60px;background:#e6e6e6"></div>
<div class="a" style="left:477.50px;top:148.57px;width:153.30px;height:0.60px;background:#e6e6e6"></div>
<div class="a" style="left:477.50px;top:165.94px;width:153.30px;height:0.60px;background:#e6e6e6"></div>
<div class="a" style="left:477.50px;top:183.31px;width:153.30px;height:0.60px;background:#e6e6e6"></div>
<div class="a" style="left:477.50px;top:200.68px;width:153.30px;height:0.60px;background:#e6e6e6"></div>
<div class="a" style="left:477.50px;top:218.05px;width:153.30px;height:0.60px;background:#e6e6e6"></div>
<div class="a" style="left:477.50px;top:235.42px;width:153.30px;height:0.60px;background:#e6e6e6"></div>
<div class="a" style="left:477.50px;top:252.79px;width:153.30px;height:0.60px;background:#e6e6e6"></div>
<div class="a" style="left:477.50px;top:270.16px;width:153.30px;height:0.60px;background:#e6e6e6"></div>
<div class="a" style="left:477.50px;top:287.53px;width:153.30px;height:0.60px;background:#e6e6e6"></div>
<div class="a" style="left:477.50px;top:304.90px;width:153.30px;height:0.60px;background:#e6e6e6"></div>
<div class="a" style="left:477.20px;top:115.00px;width:0.60px;height:190.20px;background:#dcdcdc"></div>
<div class="a" style="left:477.80px;top:115.00px;width:1.50px;height:190.20px;background:linear-gradient(90deg,rgba(0,0,0,0.04),rgba(0,0,0,0))"></div>
<svg style="left:0;top:0" width="697" height="429" viewBox="0 0 697 429"><g fill="#999"><rect x="477.0" y="121.0" width="0.8" height="0.8"/><rect x="477.0" y="123.1" width="0.8" height="0.8"/><rect x="477.0" y="125.2" width="0.8" height="0.8"/></g></svg>
<div class="t" style="left:354.15px;width:2711.86px;text-align:center;top:0;font-size:40px;line-height:40px;transform:translate(0,120.01px) scale(0.14750);transform-origin:0 0;color:#666;font-weight:400;-webkit-text-stroke:1.02px #666;">操作</div>
<div class="a" style="left:485.90px;top:133.85px;width:18.80px;height:12.75px;background:#009688;border-radius:1px"></div>
<div class="t" style="left:295.30px;width:3137.25px;text-align:center;top:0;font-size:40px;line-height:40px;transform:translate(0,137.75px) scale(0.12750);transform-origin:0 0;color:#fff;font-weight:400;-webkit-text-stroke:0.78px #fff;">查看</div>
<div class="a" style="left:510.50px;top:133.85px;width:18.60px;height:12.75px;background:#009688;border-radius:1px"></div>
<div class="t" style="left:319.80px;width:3137.25px;text-align:center;top:0;font-size:40px;line-height:40px;transform:translate(0,137.75px) scale(0.12750);transform-origin:0 0;color:#fff;font-weight:400;-webkit-text-stroke:0.78px #fff;">编辑</div>
<div class="a" style="left:535.00px;top:133.85px;width:18.70px;height:12.75px;background:#FF5722;border-radius:1px"></div>
<div class="t" style="left:344.35px;width:3137.25px;text-align:center;top:0;font-size:40px;line-height:40px;transform:translate(0,137.75px) scale(0.12750);transform-origin:0 0;color:#fff;font-weight:400;-webkit-text-stroke:0.78px #fff;">删除</div>
<div class="a" style="left:559.60px;top:133.85px;width:28.70px;height:12.75px;background:#009688;border-radius:1px"></div>
<div class="t" style="left:373.95px;width:3137.25px;text-align:center;top:0;font-size:40px;line-height:40px;transform:translate(0,137.75px) scale(0.12750);transform-origin:0 0;color:#fff;font-weight:400;-webkit-text-stroke:0.78px #fff;">报警记录</div>
<div class="a" style="left:594.00px;top:133.85px;width:29.10px;height:12.75px;background:#009688;border-radius:1px"></div>
<div class="t" style="left:408.55px;width:3137.25px;text-align:center;top:0;font-size:40px;line-height:40px;transform:translate(0,137.75px) scale(0.12750);transform-origin:0 0;color:#fff;font-weight:400;-webkit-text-stroke:0.78px #fff;">联动记录</div>
<div class="a" style="left:485.90px;top:151.22px;width:18.80px;height:12.75px;background:#009688;border-radius:1px"></div>
<div class="t" style="left:295.30px;width:3137.25px;text-align:center;top:0;font-size:40px;line-height:40px;transform:translate(0,155.12px) scale(0.12750);transform-origin:0 0;color:#fff;font-weight:400;-webkit-text-stroke:0.78px #fff;">查看</div>
<div class="a" style="left:510.50px;top:151.22px;width:18.60px;height:12.75px;background:#009688;border-radius:1px"></div>
<div class="t" style="left:319.80px;width:3137.25px;text-align:center;top:0;font-size:40px;line-height:40px;transform:translate(0,155.12px) scale(0.12750);transform-origin:0 0;color:#fff;font-weight:400;-webkit-text-stroke:0.78px #fff;">编辑</div>
<div class="a" style="left:535.00px;top:151.22px;width:18.70px;height:12.75px;background:#FF5722;border-radius:1px"></div>
<div class="t" style="left:344.35px;width:3137.25px;text-align:center;top:0;font-size:40px;line-height:40px;transform:translate(0,155.12px) scale(0.12750);transform-origin:0 0;color:#fff;font-weight:400;-webkit-text-stroke:0.78px #fff;">删除</div>
<div class="a" style="left:559.60px;top:151.22px;width:28.70px;height:12.75px;background:#009688;border-radius:1px"></div>
<div class="t" style="left:373.95px;width:3137.25px;text-align:center;top:0;font-size:40px;line-height:40px;transform:translate(0,155.12px) scale(0.12750);transform-origin:0 0;color:#fff;font-weight:400;-webkit-text-stroke:0.78px #fff;">报警记录</div>
<div class="a" style="left:594.00px;top:151.22px;width:29.10px;height:12.75px;background:#009688;border-radius:1px"></div>
<div class="t" style="left:408.55px;width:3137.25px;text-align:center;top:0;font-size:40px;line-height:40px;transform:translate(0,155.12px) scale(0.12750);transform-origin:0 0;color:#fff;font-weight:400;-webkit-text-stroke:0.78px #fff;">联动记录</div>
<div class="a" style="left:485.90px;top:168.59px;width:18.80px;height:12.75px;background:#009688;border-radius:1px"></div>
<div class="t" style="left:295.30px;width:3137.25px;text-align:center;top:0;font-size:40px;line-height:40px;transform:translate(0,172.49px) scale(0.12750);transform-origin:0 0;color:#fff;font-weight:400;-webkit-text-stroke:0.78px #fff;">查看</div>
<div class="a" style="left:510.50px;top:168.59px;width:18.60px;height:12.75px;background:#009688;border-radius:1px"></div>
<div class="t" style="left:319.80px;width:3137.25px;text-align:center;top:0;font-size:40px;line-height:40px;transform:translate(0,172.49px) scale(0.12750);transform-origin:0 0;color:#fff;font-weight:400;-webkit-text-stroke:0.78px #fff;">编辑</div>
<div class="a" style="left:535.00px;top:168.59px;width:18.70px;height:12.75px;background:#FF5722;border-radius:1px"></div>
<div class="t" style="left:344.35px;width:3137.25px;text-align:center;top:0;font-size:40px;line-height:40px;transform:translate(0,172.49px) scale(0.12750);transform-origin:0 0;color:#fff;font-weight:400;-webkit-text-stroke:0.78px #fff;">删除</div>
<div class="a" style="left:559.60px;top:168.59px;width:28.70px;height:12.75px;background:#009688;border-radius:1px"></div>
<div class="t" style="left:373.95px;width:3137.25px;text-align:center;top:0;font-size:40px;line-height:40px;transform:translate(0,172.49px) scale(0.12750);transform-origin:0 0;color:#fff;font-weight:400;-webkit-text-stroke:0.78px #fff;">报警记录</div>
<div class="a" style="left:594.00px;top:168.59px;width:29.10px;height:12.75px;background:#009688;border-radius:1px"></div>
<div class="t" style="left:408.55px;width:3137.25px;text-align:center;top:0;font-size:40px;line-height:40px;transform:translate(0,172.49px) scale(0.12750);transform-origin:0 0;color:#fff;font-weight:400;-webkit-text-stroke:0.78px #fff;">联动记录</div>
<div class="a" style="left:485.90px;top:185.96px;width:18.80px;height:12.75px;background:#009688;border-radius:1px"></div>
<div class="t" style="left:295.30px;width:3137.25px;text-align:center;top:0;font-size:40px;line-height:40px;transform:translate(0,189.86px) scale(0.12750);transform-origin:0 0;color:#fff;font-weight:400;-webkit-text-stroke:0.78px #fff;">查看</div>
<div class="a" style="left:510.50px;top:185.96px;width:18.60px;height:12.75px;background:#009688;border-radius:1px"></div>
<div class="t" style="left:319.80px;width:3137.25px;text-align:center;top:0;font-size:40px;line-height:40px;transform:translate(0,189.86px) scale(0.12750);transform-origin:0 0;color:#fff;font-weight:400;-webkit-text-stroke:0.78px #fff;">编辑</div>
<div class="a" style="left:535.00px;top:185.96px;width:18.70px;height:12.75px;background:#FF5722;border-radius:1px"></div>
<div class="t" style="left:344.35px;width:3137.25px;text-align:center;top:0;font-size:40px;line-height:40px;transform:translate(0,189.86px) scale(0.12750);transform-origin:0 0;color:#fff;font-weight:400;-webkit-text-stroke:0.78px #fff;">删除</div>
<div class="a" style="left:559.60px;top:185.96px;width:28.70px;height:12.75px;background:#009688;border-radius:1px"></div>
<div class="t" style="left:373.95px;width:3137.25px;text-align:center;top:0;font-size:40px;line-height:40px;transform:translate(0,189.86px) scale(0.12750);transform-origin:0 0;color:#fff;font-weight:400;-webkit-text-stroke:0.78px #fff;">报警记录</div>
<div class="a" style="left:594.00px;top:185.96px;width:29.10px;height:12.75px;background:#009688;border-radius:1px"></div>
<div class="t" style="left:408.55px;width:3137.25px;text-align:center;top:0;font-size:40px;line-height:40px;transform:translate(0,189.86px) scale(0.12750);transform-origin:0 0;color:#fff;font-weight:400;-webkit-text-stroke:0.78px #fff;">联动记录</div>
<div class="a" style="left:485.90px;top:203.33px;width:18.80px;height:12.75px;background:#009688;border-radius:1px"></div>
<div class="t" style="left:295.30px;width:3137.25px;text-align:center;top:0;font-size:40px;line-height:40px;transform:translate(0,207.23px) scale(0.12750);transform-origin:0 0;color:#fff;font-weight:400;-webkit-text-stroke:0.78px #fff;">查看</div>
<div class="a" style="left:510.50px;top:203.33px;width:18.60px;height:12.75px;background:#009688;border-radius:1px"></div>
<div class="t" style="left:319.80px;width:3137.25px;text-align:center;top:0;font-size:40px;line-height:40px;transform:translate(0,207.23px) scale(0.12750);transform-origin:0 0;color:#fff;font-weight:400;-webkit-text-stroke:0.78px #fff;">编辑</div>
<div class="a" style="left:535.00px;top:203.33px;width:18.70px;height:12.75px;background:#FF5722;border-radius:1px"></div>
<div class="t" style="left:344.35px;width:3137.25px;text-align:center;top:0;font-size:40px;line-height:40px;transform:translate(0,207.23px) scale(0.12750);transform-origin:0 0;color:#fff;font-weight:400;-webkit-text-stroke:0.78px #fff;">删除</div>
<div class="a" style="left:559.60px;top:203.33px;width:28.70px;height:12.75px;background:#009688;border-radius:1px"></div>
<div class="t" style="left:373.95px;width:3137.25px;text-align:center;top:0;font-size:40px;line-height:40px;transform:translate(0,207.23px) scale(0.12750);transform-origin:0 0;color:#fff;font-weight:400;-webkit-text-stroke:0.78px #fff;">报警记录</div>
<div class="a" style="left:594.00px;top:203.33px;width:29.10px;height:12.75px;background:#009688;border-radius:1px"></div>
<div class="t" style="left:408.55px;width:3137.25px;text-align:center;top:0;font-size:40px;line-height:40px;transform:translate(0,207.23px) scale(0.12750);transform-origin:0 0;color:#fff;font-weight:400;-webkit-text-stroke:0.78px #fff;">联动记录</div>
<div class="a" style="left:485.90px;top:220.70px;width:18.80px;height:12.75px;background:#009688;border-radius:1px"></div>
<div class="t" style="left:295.30px;width:3137.25px;text-align:center;top:0;font-size:40px;line-height:40px;transform:translate(0,224.60px) scale(0.12750);transform-origin:0 0;color:#fff;font-weight:400;-webkit-text-stroke:0.78px #fff;">查看</div>
<div class="a" style="left:510.50px;top:220.70px;width:18.60px;height:12.75px;background:#009688;border-radius:1px"></div>
<div class="t" style="left:319.80px;width:3137.25px;text-align:center;top:0;font-size:40px;line-height:40px;transform:translate(0,224.60px) scale(0.12750);transform-origin:0 0;color:#fff;font-weight:400;-webkit-text-stroke:0.78px #fff;">编辑</div>
<div class="a" style="left:535.00px;top:220.70px;width:18.70px;height:12.75px;background:#FF5722;border-radius:1px"></div>
<div class="t" style="left:344.35px;width:3137.25px;text-align:center;top:0;font-size:40px;line-height:40px;transform:translate(0,224.60px) scale(0.12750);transform-origin:0 0;color:#fff;font-weight:400;-webkit-text-stroke:0.78px #fff;">删除</div>
<div class="a" style="left:559.60px;top:220.70px;width:28.70px;height:12.75px;background:#009688;border-radius:1px"></div>
<div class="t" style="left:373.95px;width:3137.25px;text-align:center;top:0;font-size:40px;line-height:40px;transform:translate(0,224.60px) scale(0.12750);transform-origin:0 0;color:#fff;font-weight:400;-webkit-text-stroke:0.78px #fff;">报警记录</div>
<div class="a" style="left:594.00px;top:220.70px;width:29.10px;height:12.75px;background:#009688;border-radius:1px"></div>
<div class="t" style="left:408.55px;width:3137.25px;text-align:center;top:0;font-size:40px;line-height:40px;transform:translate(0,224.60px) scale(0.12750);transform-origin:0 0;color:#fff;font-weight:400;-webkit-text-stroke:0.78px #fff;">联动记录</div>
<div class="a" style="left:485.90px;top:238.07px;width:18.80px;height:12.75px;background:#009688;border-radius:1px"></div>
<div class="t" style="left:295.30px;width:3137.25px;text-align:center;top:0;font-size:40px;line-height:40px;transform:translate(0,241.97px) scale(0.12750);transform-origin:0 0;color:#fff;font-weight:400;-webkit-text-stroke:0.78px #fff;">查看</div>
<div class="a" style="left:510.50px;top:238.07px;width:18.60px;height:12.75px;background:#009688;border-radius:1px"></div>
<div class="t" style="left:319.80px;width:3137.25px;text-align:center;top:0;font-size:40px;line-height:40px;transform:translate(0,241.97px) scale(0.12750);transform-origin:0 0;color:#fff;font-weight:400;-webkit-text-stroke:0.78px #fff;">编辑</div>
<div class="a" style="left:535.00px;top:238.07px;width:18.70px;height:12.75px;background:#FF5722;border-radius:1px"></div>
<div class="t" style="left:344.35px;width:3137.25px;text-align:center;top:0;font-size:40px;line-height:40px;transform:translate(0,241.97px) scale(0.12750);transform-origin:0 0;color:#fff;font-weight:400;-webkit-text-stroke:0.78px #fff;">删除</div>
<div class="a" style="left:559.60px;top:238.07px;width:28.70px;height:12.75px;background:#009688;border-radius:1px"></div>
<div class="t" style="left:373.95px;width:3137.25px;text-align:center;top:0;font-size:40px;line-height:40px;transform:translate(0,241.97px) scale(0.12750);transform-origin:0 0;color:#fff;font-weight:400;-webkit-text-stroke:0.78px #fff;">报警记录</div>
<div class="a" style="left:594.00px;top:238.07px;width:29.10px;height:12.75px;background:#009688;border-radius:1px"></div>
<div class="t" style="left:408.55px;width:3137.25px;text-align:center;top:0;font-size:40px;line-height:40px;transform:translate(0,241.97px) scale(0.12750);transform-origin:0 0;color:#fff;font-weight:400;-webkit-text-stroke:0.78px #fff;">联动记录</div>
<div class="a" style="left:485.90px;top:255.44px;width:18.80px;height:12.75px;background:#009688;border-radius:1px"></div>
<div class="t" style="left:295.30px;width:3137.25px;text-align:center;top:0;font-size:40px;line-height:40px;transform:translate(0,259.34px) scale(0.12750);transform-origin:0 0;color:#fff;font-weight:400;-webkit-text-stroke:0.78px #fff;">查看</div>
<div class="a" style="left:510.50px;top:255.44px;width:18.60px;height:12.75px;background:#009688;border-radius:1px"></div>
<div class="t" style="left:319.80px;width:3137.25px;text-align:center;top:0;font-size:40px;line-height:40px;transform:translate(0,259.34px) scale(0.12750);transform-origin:0 0;color:#fff;font-weight:400;-webkit-text-stroke:0.78px #fff;">编辑</div>
<div class="a" style="left:535.00px;top:255.44px;width:18.70px;height:12.75px;background:#FF5722;border-radius:1px"></div>
<div class="t" style="left:344.35px;width:3137.25px;text-align:center;top:0;font-size:40px;line-height:40px;transform:translate(0,259.34px) scale(0.12750);transform-origin:0 0;color:#fff;font-weight:400;-webkit-text-stroke:0.78px #fff;">删除</div>
<div class="a" style="left:559.60px;top:255.44px;width:28.70px;height:12.75px;background:#009688;border-radius:1px"></div>
<div class="t" style="left:373.95px;width:3137.25px;text-align:center;top:0;font-size:40px;line-height:40px;transform:translate(0,259.34px) scale(0.12750);transform-origin:0 0;color:#fff;font-weight:400;-webkit-text-stroke:0.78px #fff;">报警记录</div>
<div class="a" style="left:594.00px;top:255.44px;width:29.10px;height:12.75px;background:#009688;border-radius:1px"></div>
<div class="t" style="left:408.55px;width:3137.25px;text-align:center;top:0;font-size:40px;line-height:40px;transform:translate(0,259.34px) scale(0.12750);transform-origin:0 0;color:#fff;font-weight:400;-webkit-text-stroke:0.78px #fff;">联动记录</div>
<div class="a" style="left:485.90px;top:272.81px;width:18.80px;height:12.75px;background:#009688;border-radius:1px"></div>
<div class="t" style="left:295.30px;width:3137.25px;text-align:center;top:0;font-size:40px;line-height:40px;transform:translate(0,276.71px) scale(0.12750);transform-origin:0 0;color:#fff;font-weight:400;-webkit-text-stroke:0.78px #fff;">查看</div>
<div class="a" style="left:510.50px;top:272.81px;width:18.60px;height:12.75px;background:#009688;border-radius:1px"></div>
<div class="t" style="left:319.80px;width:3137.25px;text-align:center;top:0;font-size:40px;line-height:40px;transform:translate(0,276.71px) scale(0.12750);transform-origin:0 0;color:#fff;font-weight:400;-webkit-text-stroke:0.78px #fff;">编辑</div>
<div class="a" style="left:535.00px;top:272.81px;width:18.70px;height:12.75px;background:#FF5722;border-radius:1px"></div>
<div class="t" style="left:344.35px;width:3137.25px;text-align:center;top:0;font-size:40px;line-height:40px;transform:translate(0,276.71px) scale(0.12750);transform-origin:0 0;color:#fff;font-weight:400;-webkit-text-stroke:0.78px #fff;">删除</div>
<div class="a" style="left:559.60px;top:272.81px;width:28.70px;height:12.75px;background:#009688;border-radius:1px"></div>
<div class="t" style="left:373.95px;width:3137.25px;text-align:center;top:0;font-size:40px;line-height:40px;transform:translate(0,276.71px) scale(0.12750);transform-origin:0 0;color:#fff;font-weight:400;-webkit-text-stroke:0.78px #fff;">报警记录</div>
<div class="a" style="left:594.00px;top:272.81px;width:29.10px;height:12.75px;background:#009688;border-radius:1px"></div>
<div class="t" style="left:408.55px;width:3137.25px;text-align:center;top:0;font-size:40px;line-height:40px;transform:translate(0,276.71px) scale(0.12750);transform-origin:0 0;color:#fff;font-weight:400;-webkit-text-stroke:0.78px #fff;">联动记录</div>
<div class="a" style="left:485.90px;top:290.18px;width:18.80px;height:12.75px;background:#009688;border-radius:1px"></div>
<div class="t" style="left:295.30px;width:3137.25px;text-align:center;top:0;font-size:40px;line-height:40px;transform:translate(0,294.08px) scale(0.12750);transform-origin:0 0;color:#fff;font-weight:400;-webkit-text-stroke:0.78px #fff;">查看</div>
<div class="a" style="left:510.50px;top:290.18px;width:18.60px;height:12.75px;background:#009688;border-radius:1px"></div>
<div class="t" style="left:319.80px;width:3137.25px;text-align:center;top:0;font-size:40px;line-height:40px;transform:translate(0,294.08px) scale(0.12750);transform-origin:0 0;color:#fff;font-weight:400;-webkit-text-stroke:0.78px #fff;">编辑</div>
<div class="a" style="left:535.00px;top:290.18px;width:18.70px;height:12.75px;background:#FF5722;border-radius:1px"></div>
<div class="t" style="left:344.35px;width:3137.25px;text-align:center;top:0;font-size:40px;line-height:40px;transform:translate(0,294.08px) scale(0.12750);transform-origin:0 0;color:#fff;font-weight:400;-webkit-text-stroke:0.78px #fff;">删除</div>
<div class="a" style="left:559.60px;top:290.18px;width:28.70px;height:12.75px;background:#009688;border-radius:1px"></div>
<div class="t" style="left:373.95px;width:3137.25px;text-align:center;top:0;font-size:40px;line-height:40px;transform:translate(0,294.08px) scale(0.12750);transform-origin:0 0;color:#fff;font-weight:400;-webkit-text-stroke:0.78px #fff;">报警记录</div>
<div class="a" style="left:594.00px;top:290.18px;width:29.10px;height:12.75px;background:#009688;border-radius:1px"></div>
<div class="t" style="left:408.55px;width:3137.25px;text-align:center;top:0;font-size:40px;line-height:40px;transform:translate(0,294.08px) scale(0.12750);transform-origin:0 0;color:#fff;font-weight:400;-webkit-text-stroke:0.78px #fff;">联动记录</div>
<svg style="left:0;top:0" width="697" height="429" viewBox="0 0 697 429"><path d="M141.3 311.3 L139.2 313.7 L141.3 316.1" fill="none" stroke="#d0d0d0" stroke-width="0.7"/></svg>
<div class="a" style="left:147.50px;top:308.20px;width:13.60px;height:10.90px;background:#009688;border-radius:1px"></div>
<div class="t" style="left:-45.70px;width:2666.67px;text-align:center;top:0;font-size:40px;line-height:40px;transform:translate(0,310.76px) scale(0.15000);transform-origin:0 0;color:#fff;font-weight:400;-webkit-text-stroke:1.00px #fff;"><span style="display:inline-block;transform:scaleY(1.08);transform-origin:0 85%">1</span></div>
<div class="t" style="left:-33.00px;width:2666.67px;text-align:center;top:0;font-size:40px;line-height:40px;transform:translate(0,310.76px) scale(0.15000);transform-origin:0 0;color:#333;font-weight:400;-webkit-text-stroke:0.80px #333;"><span style="display:inline-block;transform:scaleY(1.08);transform-origin:0 85%">2</span></div>
<div class="t" style="left:-20.50px;width:2666.67px;text-align:center;top:0;font-size:40px;line-height:40px;transform:translate(0,310.76px) scale(0.15000);transform-origin:0 0;color:#333;font-weight:400;-webkit-text-stroke:0.80px #333;"><span style="display:inline-block;transform:scaleY(1.08);transform-origin:0 85%">3</span></div>
<div class="t" style="left:-12.00px;width:2758.62px;text-align:center;top:0;font-size:40px;line-height:40px;transform:translate(0,310.36px) scale(0.14500);transform-origin:0 0;color:#999;font-weight:400;-webkit-text-stroke:0.34px #999;"><span style="display:inline-block;transform:scaleY(1.08);transform-origin:0 85%">...</span></div>
<div class="t" style="left:-3.30px;width:2666.67px;text-align:center;top:0;font-size:40px;line-height:40px;transform:translate(0,310.76px) scale(0.15000);transform-origin:0 0;color:#333;font-weight:400;-webkit-text-stroke:0.80px #333;"><span style="display:inline-block;transform:scaleY(1.08);transform-origin:0 85%">6</span></div>
<svg style="left:0;top:0" width="697" height="429" viewBox="0 0 697 429"><path d="M210.0 311.3 L212.1 313.7 L210.0 316.1" fill="none" stroke="#333" stroke-width="0.7"/></svg>
<div class="t" style="left:219.00px;top:0;font-size:40px;line-height:40px;transform:translate(0,311.25px) scale(0.12500);transform-origin:0 0;color:#aaa;font-weight:400;-webkit-text-stroke:0.40px #aaa;">到第</div>
<div class="a" style="left:233.00px;top:308.00px;width:16.60px;height:11.50px;border:0.6px solid #e6e6e6;border-radius:1px"></div>
<div class="t" style="left:41.30px;width:2857.14px;text-align:center;top:0;font-size:40px;line-height:40px;transform:translate(0,310.96px) scale(0.14000);transform-origin:0 0;color:#333;font-weight:400;-webkit-text-stroke:0.71px #333;"><span style="display:inline-block;transform:scaleY(1.08);transform-origin:0 85%">1</span></div>
<div class="t" style="left:254.00px;top:0;font-size:40px;line-height:40px;transform:translate(0,311.25px) scale(0.12500);transform-origin:0 0;color:#aaa;font-weight:400;-webkit-text-stroke:0.40px #aaa;">页</div>
<div class="a" style="left:263.20px;top:308.00px;width:19.50px;height:11.50px;border:0.6px solid #e6e6e6;border-radius:1px"></div>
<div class="t" style="left:73.00px;width:3200.00px;text-align:center;top:0;font-size:40px;line-height:40px;transform:translate(0,311.45px) scale(0.12500);transform-origin:0 0;color:#333;font-weight:400;-webkit-text-stroke:0.96px #333;">确定</div>
<div class="t" style="left:287.30px;top:0;font-size:40px;line-height:40px;transform:translate(0,311.15px) scale(0.13000);transform-origin:0 0;color:#333;font-weight:400;-webkit-text-stroke:0.92px #333;">共 <span style="display:inline-block;transform:scaleY(1.08);transform-origin:0 85%">56</span> 条</div>
<div class="a" style="left:310.20px;top:309.60px;width:35.60px;height:8.00px;background:linear-gradient(#f6f6f6,#e9e9e9);border-radius:2px;border:0.5px solid #dedede"></div>
<div class="t" style="left:313.50px;top:0;font-size:40px;line-height:40px;transform:translate(0,311.35px) scale(0.13000);transform-origin:0 0;color:#333;font-weight:400;-webkit-text-stroke:0.92px #333;"><span style="display:inline-block;transform:scaleY(1.08);transform-origin:0 85%">10</span> 条<span style="display:inline-block;transform:scaleY(1.08);transform-origin:0 85%">/</span>页</div>
<svg style="left:0;top:0" width="697" height="429" viewBox="0 0 697 429"><path d="M340.3 313.2 L341.8 311.0 L343.3 313.2Z M340.3 314.1 L341.8 316.3 L343.3 314.1Z" fill="#222"/></svg>
<div class="a" style="left:468.70px;top:172.80px;width:208.30px;height:232.00px;background:#fff;box-shadow:1px 2px 20px rgba(0,0,0,0.2)"></div>
<div class="a" style="left:473.00px;top:176.70px;width:200.00px;height:25.10px;background:#f6f6f6"></div>
<div class="t" style="left:484.00px;top:0;font-size:40px;line-height:40px;transform:translate(0,184.20px) scale(0.24500);transform-origin:0 0;color:#2a2a2a;font-weight:400;-webkit-text-stroke:1.22px #2a2a2a;">查看</div>
<div class="a" style="left:647.00px;top:189.40px;width:9.00px;height:1.50px;background:#666"></div>
<svg style="left:0;top:0" width="697" height="429" viewBox="0 0 697 429"><g fill="none" stroke="#6a6a6a" stroke-width="0.75"><rect x="663.6" y="185.4" width="7.8" height="8"/><rect x="663.6" y="189.9" width="3.4" height="3.5"/><path d="M667.2 189.8 L670.9 185.9 M668.2 185.9 H670.9 V188.6"/></g></svg>
<div class="t" style="left:481.00px;top:0;font-size:40px;line-height:40px;transform:translate(0,213.34px) scale(0.21250);transform-origin:0 0;color:#1e1e1e;font-weight:400;-webkit-text-stroke:1.22px #1e1e1e;">任务名称：</div>
<div class="t" style="left:528.00px;top:0;font-size:40px;line-height:40px;transform:translate(0,213.34px) scale(0.21250);transform-origin:0 0;color:#1e1e1e;font-weight:400;-webkit-text-stroke:1.22px #1e1e1e;">高于低于</div>
<div class="t" style="left:481.00px;top:0;font-size:40px;line-height:40px;transform:translate(0,237.74px) scale(0.21250);transform-origin:0 0;color:#1e1e1e;font-weight:400;-webkit-text-stroke:1.22px #1e1e1e;">所属区域：</div>
<div class="t" style="left:528.00px;top:0;font-size:40px;line-height:40px;transform:translate(0,237.74px) scale(0.21250);transform-origin:0 0;color:#1e1e1e;font-weight:400;-webkit-text-stroke:1.22px #1e1e1e;">西瓜基地<span style="display:inline-block;transform:scaleY(1.08);transform-origin:0 85%">/</span>环境质量检测系统</div>
<div class="t" style="left:481.00px;top:0;font-size:40px;line-height:40px;transform:translate(0,262.13px) scale(0.21250);transform-origin:0 0;color:#1e1e1e;font-weight:400;-webkit-text-stroke:1.22px #1e1e1e;">触发设备：</div>
<div class="t" style="left:528.00px;top:0;font-size:40px;line-height:40px;transform:translate(0,262.13px) scale(0.21250);transform-origin:0 0;color:#1e1e1e;font-weight:400;-webkit-text-stroke:1.22px #1e1e1e;">环境质量检测<span style="display:inline-block;transform:scaleY(1.08);transform-origin:0 85%">-Test</span></div>
<div class="t" style="left:481.00px;top:0;font-size:40px;line-height:40px;transform:translate(0,286.03px) scale(0.21250);transform-origin:0 0;color:#1e1e1e;font-weight:400;-webkit-text-stroke:1.22px #1e1e1e;">触发从机：</div>
<div class="t" style="left:528.00px;top:0;font-size:40px;line-height:40px;transform:translate(0,286.03px) scale(0.21250);transform-origin:0 0;color:#1e1e1e;font-weight:400;-webkit-text-stroke:1.22px #1e1e1e;">二氧化碳浓度</div>
<div class="t" style="left:481.00px;top:0;font-size:40px;line-height:40px;transform:translate(0,310.53px) scale(0.21250);transform-origin:0 0;color:#1e1e1e;font-weight:400;-webkit-text-stroke:1.22px #1e1e1e;">数</div>
<div class="t" style="left:493.40px;top:0;font-size:40px;line-height:40px;transform:translate(0,310.53px) scale(0.21250);transform-origin:0 0;color:#1e1e1e;font-weight:400;-webkit-text-stroke:1.22px #1e1e1e;">据</div>
<div class="t" style="left:507.00px;top:0;font-size:40px;line-height:40px;transform:translate(0,310.53px) scale(0.21250);transform-origin:0 0;color:#1e1e1e;font-weight:400;-webkit-text-stroke:1.22px #1e1e1e;">点</div>
<div class="t" style="left:515.50px;top:0;font-size:40px;line-height:40px;transform:translate(0,310.53px) scale(0.21250);transform-origin:0 0;color:#1e1e1e;font-weight:400;-webkit-text-stroke:1.22px #1e1e1e;">：</div>
<div class="t" style="left:529.00px;top:0;font-size:40px;line-height:40px;transform:translate(0,310.53px) scale(0.21250);transform-origin:0 0;color:#1e1e1e;font-weight:400;-webkit-text-stroke:1.22px #1e1e1e;">二氧化碳</div>
<div class="t" style="left:481.00px;top:0;font-size:40px;line-height:40px;transform:translate(0,335.03px) scale(0.21250);transform-origin:0 0;color:#1e1e1e;font-weight:400;-webkit-text-stroke:1.22px #1e1e1e;">监测时间段：</div>
<div class="t" style="left:536.50px;top:0;font-size:40px;line-height:40px;transform:translate(0,335.03px) scale(0.21250);transform-origin:0 0;color:#1e1e1e;font-weight:400;-webkit-text-stroke:1.22px #1e1e1e;">无</div>
<div class="t" style="left:481.00px;top:0;font-size:40px;line-height:40px;transform:translate(0,359.23px) scale(0.21250);transform-origin:0 0;color:#1e1e1e;font-weight:400;-webkit-text-stroke:1.22px #1e1e1e;">触发条件：</div>
<div class="t" style="left:528.00px;top:0;font-size:40px;line-height:40px;transform:translate(0,359.23px) scale(0.21250);transform-origin:0 0;color:#1e1e1e;font-weight:400;-webkit-text-stroke:1.22px #1e1e1e;">数值高于<span style="display:inline-block;transform:scaleY(1.08);transform-origin:0 85%">990</span>低于<span style="display:inline-block;transform:scaleY(1.08);transform-origin:0 85%">600</span></div>
<div class="t" style="left:481.00px;top:0;font-size:40px;line-height:40px;transform:translate(0,383.63px) scale(0.21250);transform-origin:0 0;color:#1e1e1e;font-weight:400;-webkit-text-stroke:1.22px #1e1e1e;">报警恢复死区：</div>
<div class="t" style="left:542.60px;top:0;font-size:40px;line-height:40px;transform:translate(0,383.63px) scale(0.21250);transform-origin:0 0;color:#1e1e1e;font-weight:400;-webkit-text-stroke:1.22px #1e1e1e;"><span style="display:inline-block;transform:scaleY(1.08);transform-origin:0 85%">0.00</span></div></div></body></html>
